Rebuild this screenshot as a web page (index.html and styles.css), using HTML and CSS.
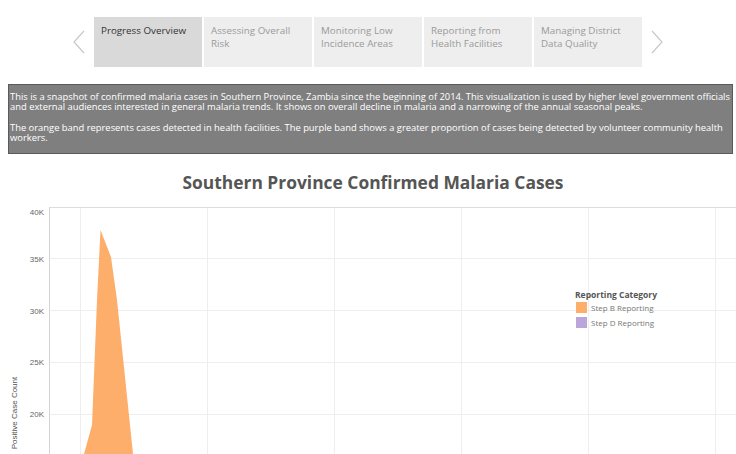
FILE: index.html
```html
<!DOCTYPE html>
<html>
<head>
<meta charset="utf-8">
<link rel="stylesheet" href="styles.css">
</head>
<body>
<nav class="tabs">
  <span class="arrow"><svg width="14" height="24" viewBox="0 0 14 24"><path d="M12 1 L2 12 L12 23" fill="none" stroke="#c8c8c8" stroke-width="1.2"/></svg></span>
  <div class="tab active">Progress Overview</div>
  <div class="tab">Assessing Overall Risk</div>
  <div class="tab">Monitoring Low Incidence Areas</div>
  <div class="tab">Reporting from Health Facilities</div>
  <div class="tab">Managing District Data Quality</div>
  <span class="arrow"><svg width="14" height="24" viewBox="0 0 14 24"><path d="M2 1 L12 12 L2 23" fill="none" stroke="#c8c8c8" stroke-width="1.2"/></svg></span>
</nav>
<div class="desc">
  <p>This is a snapshot of confirmed malaria cases in Southern Province, Zambia since the beginning of 2014. This visualization is used by higher level government officials and external audiences interested in general malaria trends. It shows on overall decline in malaria and a narrowing of the annual seasonal peaks.</p>
  <p>The orange band represents cases detected in health facilities. The purple band shows a greater proportion of cases being detected by volunteer community health workers.</p>
</div>
<h1 class="title">Southern Province Confirmed Malaria Cases</h1>
<div class="chart">
<svg width="736" height="260" viewBox="0 194 736 260">
  <g stroke="#eeeeee" stroke-width="1">
    <line x1="80.5" y1="207" x2="80.5" y2="454"/>
    <line x1="207.5" y1="207" x2="207.5" y2="454"/>
    <line x1="334.5" y1="207" x2="334.5" y2="454"/>
    <line x1="461.5" y1="207" x2="461.5" y2="454"/>
    <line x1="588.5" y1="207" x2="588.5" y2="454"/>
    <line x1="715.5" y1="207" x2="715.5" y2="454"/>
    <line x1="49" y1="258.5" x2="736" y2="258.5"/>
    <line x1="49" y1="310.5" x2="736" y2="310.5"/>
    <line x1="49" y1="362.5" x2="736" y2="362.5"/>
    <line x1="49" y1="414.5" x2="736" y2="414.5"/>
  </g>
  <line x1="49" y1="207.5" x2="736" y2="207.5" stroke="#dddddd"/>
  <line x1="49.5" y1="207" x2="49.5" y2="454" stroke="#d4d4d4"/>
  <g class="tick">
    <text x="44" y="215" text-anchor="end">40K</text>
    <text x="44" y="261.5" text-anchor="end">35K</text>
    <text x="44" y="313.5" text-anchor="end">30K</text>
    <text x="44" y="365" text-anchor="end">25K</text>
    <text x="44" y="417" text-anchor="end">20K</text>
  </g>
  <text class="axis-title" transform="translate(17 413) rotate(-90)" text-anchor="middle">Positive Case Count</text>
  <polygon points="84,454 92,425 97,300 100.5,230 111,257 117,300 133,454" fill="#fdae6b"/>
  <text class="legend-title" x="575" y="298">Reporting Category</text>
  <rect x="576" y="302" width="11" height="11" fill="#fdae6b"/>
  <text class="legend-item" x="591" y="310.5">Step B Reporting</text>
  <rect x="576" y="317" width="11" height="11" fill="#bca5d8"/>
  <text class="legend-item" x="591" y="325.5">Step D Reporting</text>
</svg>
</div>
</body>
</html>
```
FILE: styles.css
```css
html, body {
  margin: 0;
  padding: 0;
  overflow: hidden;
  background: #ffffff;
  font-family: "Open Sans", "Liberation Sans", sans-serif;
}
.tabs {
  display: flex;
  justify-content: center;
  align-items: center;
  gap: 2px;
  padding-top: 17px;
  height: 50px;
}
.arrow {
  display: flex;
  width: 14px;
  margin: 0 6px;
}
.tab {
  box-sizing: border-box;
  width: 108px;
  height: 50px;
  background: #eeeeee;
  color: #9a9a9a;
  font-size: 9.8px;
  line-height: 13px;
  padding: 7px 8px 0 7px;
}
.tab.active {
  background: #d9d9d9;
  color: #333333;
}
.desc {
  box-sizing: border-box;
  margin: 17px 0 0 8px;
  width: 725px;
  height: 70px;
  background: #7f7f7f;
  border: 1px solid #5a5a5a;
  color: #ffffff;
  font-size: 9.4px;
  line-height: 10px;
  padding: 7px 0 0 1px;
}
.desc p {
  margin: 0 0 11px 0;
  width: 728px;
}
.desc p:last-child {
  margin-bottom: 0;
}
.title {
  margin: 16px 0 0 0;
  padding-left: 10px;
  text-align: center;
  font-size: 17.4px;
  line-height: 24px;
  font-weight: 700;
  color: #555555;
}
.chart {
  display: block;
  height: 260px;
}
.chart svg {
  display: block;
}
.tick text {
  font-family: "Liberation Sans", Arial, sans-serif;
  font-size: 8px;
  fill: #666666;
}
.axis-title {
  font-family: "Liberation Sans", Arial, sans-serif;
  font-size: 8px;
  fill: #555555;
}
.legend-title {
  font-size: 8.5px;
  font-weight: 700;
  fill: #555555;
}
.legend-item {
  font-size: 8px;
  fill: #777777;
}
```
